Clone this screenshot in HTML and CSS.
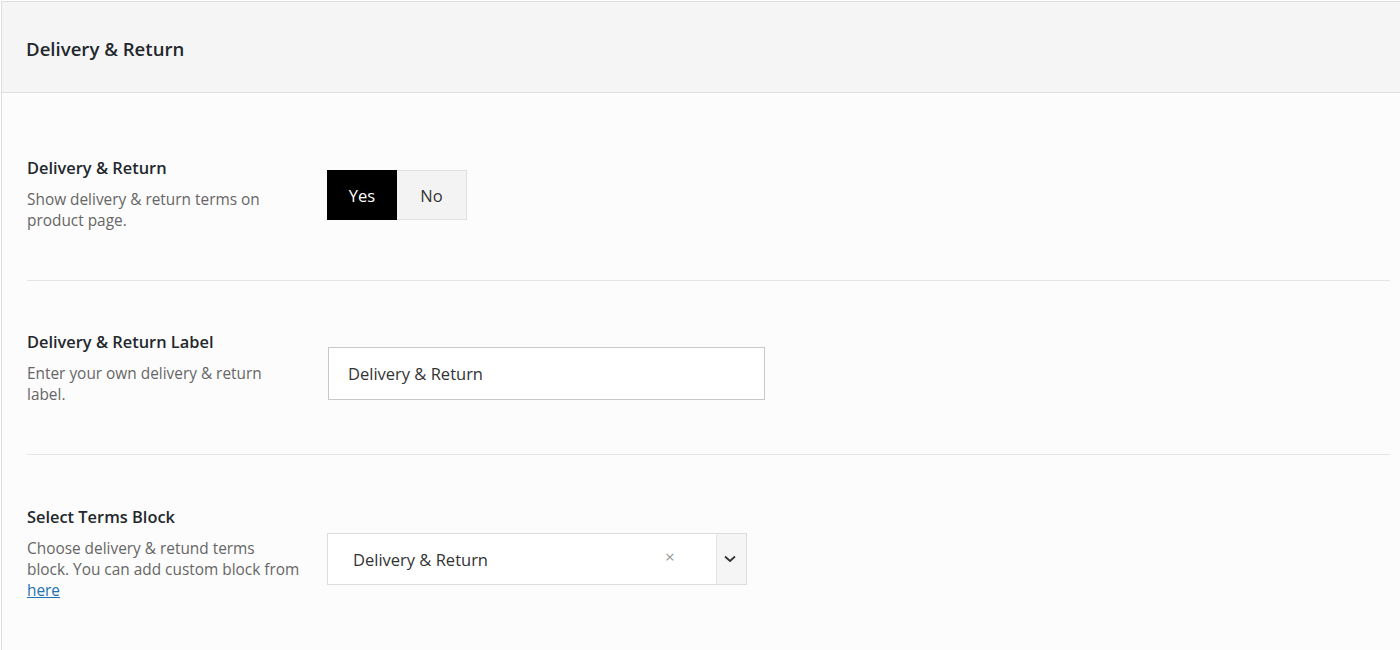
FILE: index.html
```html
<!DOCTYPE html>
<html>
<head>
<meta charset="utf-8">
<link rel="stylesheet" href="styles.css">
</head>
<body>
<div class="panel">
  <div class="panel-head">
    <h2 class="panel-title">Delivery &amp; Return</h2>
  </div>
  <div class="panel-body">
    <div class="field field-first">
      <div class="field-info">
        <div class="field-title">Delivery &amp; Return</div>
        <div class="field-desc">Show delivery &amp; return terms on product page.</div>
      </div>
      <div class="field-control ctl-switch">
        <div class="switch">
          <span class="switch-opt switch-on">Yes</span>
          <span class="switch-opt switch-off">No</span>
        </div>
      </div>
    </div>
    <div class="field field-mid">
      <div class="field-info">
        <div class="field-title">Delivery &amp; Return Label</div>
        <div class="field-desc">Enter your own delivery &amp; return label.</div>
      </div>
      <div class="field-control ctl-input">
        <input class="text-input" type="text" value="Delivery &amp; Return">
      </div>
    </div>
    <div class="field field-last">
      <div class="field-info">
        <div class="field-title">Select Terms Block</div>
        <div class="field-desc">Choose delivery &amp; retund terms<br>block. You can add custom block from <a href="#" class="link">here</a></div>
      </div>
      <div class="field-control ctl-select">
        <div class="select">
          <span class="select-value">Delivery &amp; Return</span>
          <span class="select-clear">×</span>
          <span class="select-arrow">
            <svg width="12" height="8" viewBox="0 0 12 8"><path d="M1 1.5 L6 6 L11 1.5" fill="none" stroke="#333" stroke-width="1.8"/></svg>
          </span>
        </div>
      </div>
    </div>
  </div>
</div>
</body>
</html>
```

FILE: styles.css
```css
* { box-sizing: border-box; }
html, body {
  margin: 0;
  padding: 0;
  background: #ffffff;
}
body {
  font-family: "Open Sans", "Noto Sans", sans-serif;
  color: #333;
}
.panel {
  margin: 1px 0 0 1px;
  border-top: 1px solid #dddddd;
  border-left: 1px solid #dddddd;
  background: #fcfcfc;
  min-height: 649px;
}
.panel-head {
  height: 91px;
  background: #f5f5f5;
  border-bottom: 1px solid #e0e0e0;
  display: flex;
  align-items: center;
  padding-left: 24px;
}
.panel-title {
  margin: 0;
  font-size: 18.6px;
  font-weight: 600;
  color: #23282d;
  line-height: 24px;
  position: relative;
  top: 2px;
}
.panel-body {
  padding: 0 10px 0 25px;
}
.field {
  display: flex;
  border-bottom: 1px solid #e5e5e5;
  padding: 50px 0 48px 0;
}
.field-first {
  padding-top: 64px;
  padding-bottom: 49px;
}
.field-mid {
  padding-bottom: 49px;
}
.field-last {
  border-bottom: none;
  padding-top: 51px;
}
.field-info {
  width: 300px;
  flex: none;
}
.field-title {
  font-size: 16.4px;
  font-weight: 600;
  line-height: 22px;
  color: #23282d;
}
.field-desc {
  margin-top: 10px;
  font-size: 15.4px;
  line-height: 21px;
  color: #666;
  width: 276px;
}
.link {
  color: #2271b1;
  text-decoration: underline;
}
.ctl-switch { padding-top: 13px; }
.ctl-input { padding-top: 16px; padding-left: 1px; }
.ctl-select { padding-top: 27px; }

.switch {
  display: flex;
}
.switch-opt {
  width: 70px;
  height: 50px;
  display: flex;
  align-items: center;
  justify-content: center;
  font-size: 16.5px;
}
.switch-on {
  background: #000;
  color: #fff;
}
.switch-off {
  background: #f3f3f3;
  color: #333;
  border: 1px solid #e0e0e0;
  border-left: none;
}
.text-input {
  width: 437px;
  height: 53px;
  border: 1px solid #c8c8c8;
  background: #fff;
  padding: 0 0 0 19px;
  font-family: inherit;
  font-size: 16.5px;
  color: #333;
  outline: none;
  margin: 0;
  display: block;
  border-radius: 0;
}
.select {
  width: 420px;
  height: 52px;
  border: 1px solid #dddddd;
  background: #fff;
  display: flex;
  align-items: center;
}
.select-value {
  flex: 1;
  padding-left: 25px;
  font-size: 16.5px;
  color: #333;
}
.select-clear {
  font-size: 17px;
  color: #999;
  width: 51px;
  text-align: left;
  position: relative;
  top: -3px;
}
.select-arrow {
  width: 30px;
  height: 100%;
  background: #f5f5f5;
  border-left: 1px solid #e5e5e5;
  display: flex;
  align-items: center;
  justify-content: center;
  padding-right: 3px;
}
.select-arrow svg { display: block; }
```
